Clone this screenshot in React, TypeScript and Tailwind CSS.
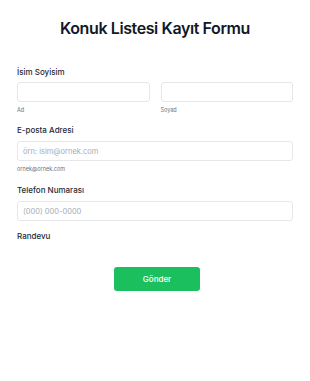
export default function App() {
  return (
    <div
      className="min-h-[381px] w-[310px] bg-white px-[17px] pt-[16px]"
      style={{ fontFamily: "Inter, 'Liberation Sans', sans-serif" }}
    >
      <h1 className="text-center text-[16px] leading-6 font-semibold tracking-tight text-[#111827]">
        Konuk Listesi Kayıt Formu
      </h1>

      <div className="mt-[26px]">
        <label className="block text-[8px] leading-3 font-medium text-[#1f2937]">
          İsim Soyisim
        </label>
        <div className="mt-1 grid grid-cols-2 gap-[11px]">
          <div>
            <input className="block h-5 w-full rounded-[3px] border border-[#e5e7eb] bg-white" />
            <span className="mt-[4px] block text-[5.5px] leading-2 text-[#6b7280]">
              Ad
            </span>
          </div>
          <div>
            <input className="block h-5 w-full rounded-[3px] border border-[#e5e7eb] bg-white" />
            <span className="mt-[4px] block text-[5.5px] leading-2 text-[#6b7280]">
              Soyad
            </span>
          </div>
        </div>
      </div>

      <div className="mt-[10px]">
        <label className="block text-[8px] leading-3 font-medium text-[#1f2937]">
          E-posta Adresi
        </label>
        <input
          placeholder="örn: isim@ornek.com"
          className="mt-[5px] block h-5 w-full rounded-[3px] border border-[#e5e7eb] bg-white px-[5px] text-[7.5px] placeholder:text-[#a5abb5]"
        />
        <span className="mt-[4px] block text-[5.5px] leading-2 text-[#6b7280]">
          ornek@ornek.com
        </span>
      </div>

      <div className="mt-[11px]">
        <label className="block text-[8px] leading-3 font-medium text-[#1f2937]">
          Telefon Numarası
        </label>
        <input
          placeholder="(000) 000-0000"
          className="mt-[5px] block h-5 w-full rounded-[3px] border border-[#e5e7eb] bg-white px-[5px] text-[7.5px] placeholder:text-[#a5abb5]"
        />
      </div>

      <div className="mt-[9px]">
        <label className="block text-[8px] leading-3 font-medium text-[#1f2937]">
          Randevu
        </label>
      </div>

      <div className="mt-[25px] flex justify-center pl-[4px]">
        <button className="h-[24px] w-[86px] rounded-[3px] bg-[#1cbf5e] text-[8px] font-medium text-white">
          Gönder
        </button>
      </div>
    </div>
  );
}
